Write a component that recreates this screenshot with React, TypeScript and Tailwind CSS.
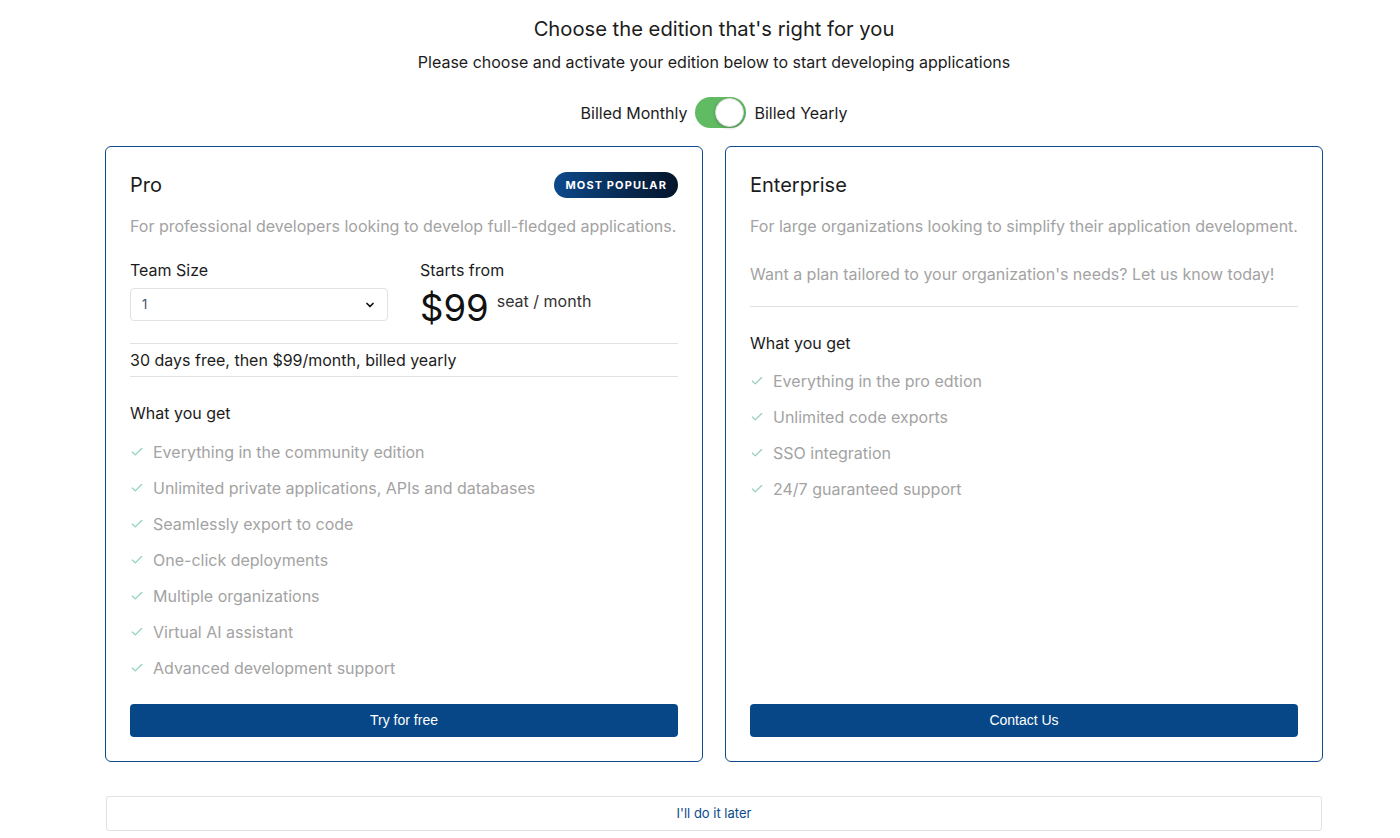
import { useState } from 'react';

const proFeatures = [
  'Everything in the community edition',
  'Unlimited private applications, APIs and databases',
  'Seamlessly export to code',
  'One-click deployments',
  'Multiple organizations',
  'Virtual AI assistant',
  'Advanced development support'
];

const enterpriseFeatures = [
  'Everything in the pro edtion',
  'Unlimited code exports',
  'SSO integration',
  '24/7 guaranteed support'
];

function Check() {
  return (
    <svg width="14" height="14" viewBox="0 0 24 24" fill="none" stroke="#8fcfb6" strokeWidth="2" strokeLinecap="round" strokeLinejoin="round">
      <path d="M20 6 9 17l-5-5" />
    </svg>
  );
}

function FeatureList({ items, top }: { items: string[]; top: string }) {
  return (
    <ul className={`${top} flex flex-col gap-[12px]`}>
      {items.map((item) => (
        <li key={item} className="flex h-[24px] items-center gap-[9px] text-[16px] text-[#a3a3a3]">
          <Check />
          <span>{item}</span>
        </li>
      ))}
    </ul>
  );
}

export default function App() {
  const [yearly, setYearly] = useState(true);

  return (
    <div className="min-h-[838px] bg-white font-['Inter','Noto_Sans',sans-serif] text-[#1c1c1c]">
      <div className="ml-[105px] w-[1218px] pt-[16px]">
        <h1 className="text-center text-[20.2px] leading-[26px]">Choose the edition that's right for you</h1>
        <p className="mt-[8px] text-center text-[16px] leading-[24px]">
          Please choose and activate your edition below to start developing applications
        </p>
        <div className="mt-[23px] flex items-center justify-center gap-[8px] text-[16px]">
          <span>Billed Monthly</span>
          <button
            type="button"
            onClick={() => setYearly(!yearly)}
            className={`flex h-[31px] w-[51px] items-center rounded-full px-[2px] ${yearly ? 'justify-end bg-[#60bb62]' : 'justify-start bg-[#d4d4d4]'}`}
          >
            <span className="h-[29px] w-[29px] rounded-full border border-[#d8d8d8] bg-white shadow-[0_1px_3px_rgba(0,0,0,0.25)]" />
          </button>
          <span>Billed Yearly</span>
        </div>

        <div className="mt-[18px] grid grid-cols-2 gap-[22px]">
          <div className="flex h-[616px] flex-col rounded-[6px] border border-[#0b4a8b] px-[24px] pb-[24px] pt-[24px]">
            <div className="flex h-[28px] items-center justify-between">
              <h2 className="text-[20px]">Pro</h2>
              <span className="flex h-[26px] items-center rounded-full bg-gradient-to-r from-[#0c4a8c] to-[#04152a] px-[11px] text-[11px] font-bold tracking-[0.1em] text-white">
                MOST POPULAR
              </span>
            </div>
            <p className="mt-[15px] text-[16px] leading-[24px] text-[#a3a3a3]">
              For professional developers looking to develop full-fledged applications.
            </p>
            <div className="mt-[22px] grid grid-cols-2 gap-[32px]">
              <div>
                <div className="text-[16px] leading-[20px]">Team Size</div>
                <div className="mt-[8px] flex h-[33px] items-center justify-between rounded-[4px] border border-[#e2e2e2] px-[11px] text-[13px] text-[#4a5568]">
                  <span>1</span>
                  <svg width="12" height="12" viewBox="0 0 24 24" fill="none" stroke="#111" strokeWidth="3.5" strokeLinecap="round" strokeLinejoin="round">
                    <path d="m6 9 6 6 6-6" />
                  </svg>
                </div>
              </div>
              <div>
                <div className="text-[16px] leading-[20px]">Starts from</div>
                <div className="mt-[6px] flex items-start">
                  <span className="text-[36.5px] leading-[44px] text-[#111]">$99</span>
                  <span className="ml-[8px] mt-[3px] text-[16px] text-[#333]">seat / month</span>
                </div>
              </div>
            </div>
            <div className="mt-[13px] border-y border-[#e2e2e2] py-[5px] text-[16px] leading-[22px]">
              30 days free, then $99/month, billed yearly
            </div>
            <div className="mt-[24px] text-[16px] leading-[24px]">What you get</div>
            <FeatureList items={proFeatures} top="mt-[15px]" />
            <button
              type="button"
              className="mt-auto h-[33px] rounded-[4px] bg-[#074788] font-['Liberation_Sans',Arial,sans-serif] text-[14px] text-white"
            >
              Try for free
            </button>
          </div>

          <div className="flex h-[616px] flex-col rounded-[6px] border border-[#0b4a8b] px-[24px] pb-[24px] pt-[24px]">
            <div className="flex h-[28px] items-center">
              <h2 className="text-[20px]">Enterprise</h2>
            </div>
            <p className="mt-[15px] text-[16px] leading-[24px] text-[#a3a3a3]">
              For large organizations looking to simplify their application development.
            </p>
            <p className="mt-[24px] text-[16px] leading-[24px] text-[#a3a3a3]">
              Want a plan tailored to your organization's needs? Let us know today!
            </p>
            <div className="mt-[20px] border-t border-[#e2e2e2]" />
            <div className="mt-[24px] text-[16px] leading-[24px]">What you get</div>
            <FeatureList items={enterpriseFeatures} top="mt-[14px]" />
            <button
              type="button"
              className="mt-auto h-[33px] rounded-[4px] bg-[#074788] font-['Liberation_Sans',Arial,sans-serif] text-[14px] text-white"
            >
              Contact Us
            </button>
          </div>
        </div>

        <button
          type="button"
          className="mt-[34px] ml-[1px] h-[35px] w-[1216px] rounded-[3px] border border-[#e2e2e2] text-[13px] text-[#0b4a8b]"
        >
          I'll do it later
        </button>
      </div>
    </div>
  );
}
